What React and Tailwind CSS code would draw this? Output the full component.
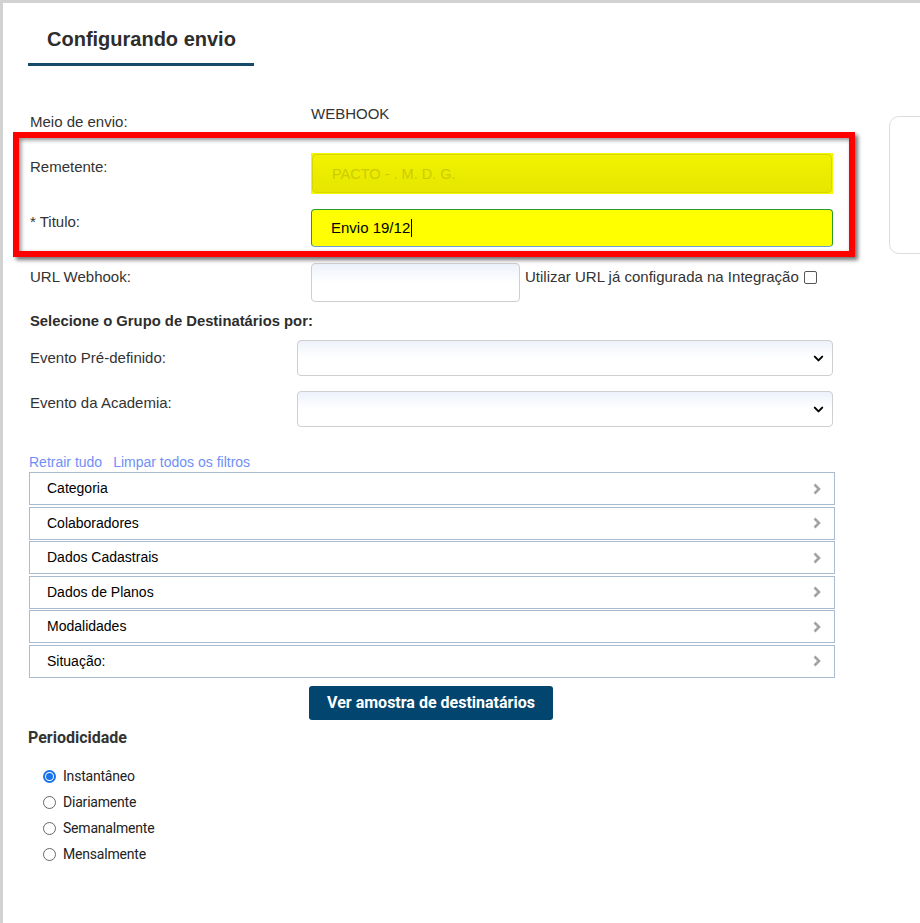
import { ChevronDown } from "lucide-react";

const filtros = [
  "Categoria",
  "Colaboradores",
  "Dados Cadastrais",
  "Dados de Planos",
  "Modalidades",
  "Situação:",
];

const periodos = ["Instantâneo", "Diariamente", "Semanalmente", "Mensalmente"];

const Chevron = () => (
  <svg width="10" height="14" viewBox="0 0 10 14" className="shrink-0">
    <path d="M2.5 2.5 L7 7 L2.5 11.5" fill="none" stroke="#a3a3a3" strokeWidth="2.6" />
  </svg>
);

const Select = () => (
  <div className="flex h-[36px] w-[536px] items-center justify-end rounded-[4px] border border-[#cfcfcf] bg-gradient-to-b from-[#edf2fa] to-white to-50% pr-[6px]">
    <ChevronDown size={15} strokeWidth={3.2} className="text-black" />
  </div>
);

const App = () => {
  return (
    <div className="min-h-[923px] w-full overflow-hidden border-l-[3px] border-t-[3px] border-[#d2d2d2] bg-white font-['Liberation_Sans',Arial,sans-serif] text-[15px] text-[#333]">
      <div className="pl-[27px]">
        {/* cabecalho */}
        <div className="-ml-[2px] w-[226px] pt-[22px]">
          <h1 className="pl-[19px] text-[20px] font-bold leading-[28px] text-[#2d2d2d]">
            Configurando envio
          </h1>
          <div className="mt-[10px] h-[3px] bg-[#17496b]" />
        </div>

        <div className="mt-[38px] flex">
          <div className="w-[826px] shrink-0">
            <div className="flex h-[28px]">
              <div className="w-[281px] pt-[8px] leading-[20px]">Meio de envio:</div>
              <div className="leading-[20px]">WEBHOOK</div>
            </div>

            {/* destaque */}
            <div className="relative pb-[10px] pt-[21px]">
              <div className="pointer-events-none absolute -left-[17px] top-0 bottom-0 w-[842px] border-[6px] border-[#ff0000] shadow-[3px_3px_4px_rgba(0,0,0,0.55),inset_2px_2px_4px_rgba(0,0,0,0.45)]" />
              <div className="flex">
                <div className="mt-[4px] w-[281px] leading-[20px]">Remetente:</div>
                <div className="h-[41px] w-[522px] bg-[#f7f700] p-[1px]">
                  <div className="flex h-full items-center rounded-[4px] border border-[#d6d600] bg-gradient-to-b from-[#f2f200] to-[#e6e600] pl-[19px] pt-[3px] text-[14.5px] text-[#cccc00]">
                    PACTO - . M. D. G.
                  </div>
                </div>
              </div>
              <div className="mt-[15px] flex">
                <div className="mt-[3px] w-[281px] leading-[20px]">* Titulo:</div>
                <div className="flex h-[38px] w-[522px] items-center rounded-[4px] border border-[#2a9a2a] border-b-[#6aa0d8] bg-[#ffff00] pl-[19px] text-[15px] text-black">
                  Envio 19/12
                  <span className="ml-[1px] h-[18px] w-px bg-black" />
                </div>
              </div>
            </div>

            <div className="mt-[6px] flex items-start">
              <div className="mt-[4px] w-[281px] leading-[20px]">URL Webhook:</div>
              <div className="h-[39px] w-[209px] rounded-[4px] border border-[#cfcfcf] bg-gradient-to-b from-[#edf2fa] to-white to-50%" />
              <div className="ml-[5px] mt-[4px] flex h-[20px] items-center gap-[5px] leading-[20px]">
                Utilizar URL já configurada na Integração
                <span className="h-[13px] w-[13px] rounded-[2px] border border-[#555] bg-white" />
              </div>
            </div>
          </div>

          <div className="ml-[33px] mt-[12px] h-[138px] w-[200px] shrink-0 rounded-[10px] border border-[#dcdcdc]" />
        </div>

        <div className="mt-[9px] text-[14.8px] font-bold leading-[20px] text-[#2d2d2d]">
          Selecione o Grupo de Destinatários por:
        </div>

        <div className="mt-[9px] flex">
          <div className="mt-[8px] w-[267px] leading-[20px]">Evento Pré-definido:</div>
          <Select />
        </div>
        <div className="mt-[15px] flex">
          <div className="mt-[2px] w-[267px] leading-[20px]">Evento da Academia:</div>
          <Select />
        </div>

        <div className="-ml-[1px] mt-[25px] flex gap-[11px] text-[14px] leading-[20px] text-[#6f8ff7]">
          <span>Retrair tudo</span>
          <span>Limpar todos os filtros</span>
        </div>

        {/* filtros */}
        <div className="-ml-[1px] flex w-[806px] flex-col gap-[1.6px]">
          {filtros.map(f => (
            <div
              key={f}
              className="flex h-[33px] items-center justify-between border border-[#a9bbd0] pl-[17px] pr-[12px] text-[14px] text-black"
            >
              <span>{f}</span>
              <Chevron />
            </div>
          ))}
        </div>

        <button className="ml-[279px] mt-[8px] h-[34px] w-[244px] rounded-[3px] bg-[#02466f] font-['Roboto',sans-serif] text-[16px] font-bold text-white">
          Ver amostra de destinatários
        </button>

        <div className="-ml-[2px] mt-[8px] font-['Roboto',sans-serif] text-[16px] font-bold leading-[20px] text-[#333]">
          Periodicidade
        </div>

        <div className="mt-[16px] font-['Roboto',sans-serif] text-[14px] text-[#222]">
          {periodos.map((p, i) => (
            <div key={p} className="ml-[13px] flex h-[26px] items-center gap-[7px]">
              {i === 0 ? (
                <span className="flex h-[13px] w-[13px] items-center justify-center rounded-full border-[2px] border-[#1a73e8] bg-white">
                  <span className="h-[7px] w-[7px] rounded-full bg-[#1a73e8]" />
                </span>
              ) : (
                <span className="h-[13px] w-[13px] rounded-full border border-[#666] bg-white" />
              )}
              <span className="tracking-[-0.2px]">{p}</span>
            </div>
          ))}
        </div>
      </div>
    </div>
  );
};

export default App;
